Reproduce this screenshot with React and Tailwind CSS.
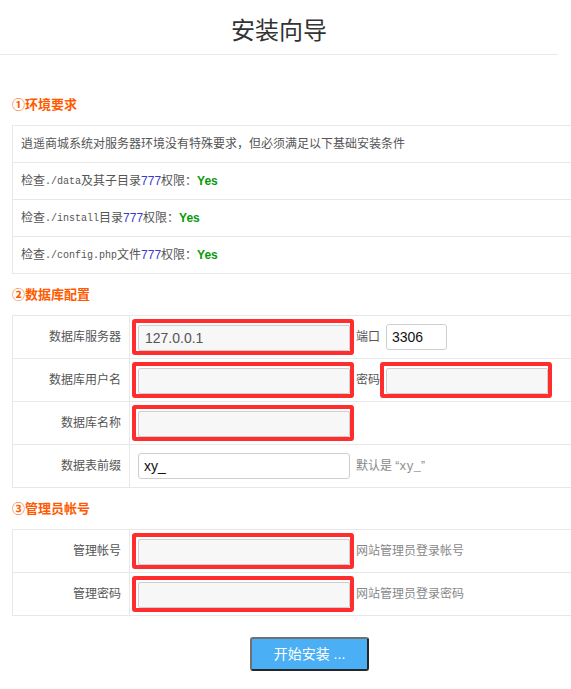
import React from "react";

const font = { fontFamily: '"Liberation Sans", "Noto Sans CJK SC", sans-serif' };

function Heading({ children }) {
  return (
    <h3 className="h-[20px] leading-[20px] text-[13px] font-bold text-[#ff5a00] mt-[11px] mb-[10px]">
      {children}
    </h3>
  );
}

function Marked({ width, value = "" }) {
  // red annotation box around an input
  return (
    <div className="inline-flex border-4 border-[#ff2d2d] rounded-[3px] pl-[2px] pt-[2px] shrink-0">
      <input
        defaultValue={value}
        style={{ width }}
        className="h-[26px] border border-[#cfcfcf] rounded-[2px] bg-[#f7f7f7] px-[6px] text-[14px] text-[#555] outline-none"
      />
    </div>
  );
}

function Row({ label, children }) {
  return (
    <div className="flex h-[43px] border-t border-[#e8e8e8] first:border-t-0 first:h-[42px]">
      <div className="w-[117px] shrink-0 border-r border-[#e8e8e8] flex items-center justify-end pr-[8px] text-[12px] text-[#555]">
        {label}
      </div>
      <div className="flex items-center pl-[2px] text-[12px] text-[#555]">{children}</div>
    </div>
  );
}

function Check({ path, suffix }) {
  return (
    <div className="h-[37px] flex items-center pl-[8px] text-[12px] text-[#555] border-t border-[#e8e8e8]">
      检查<span className="text-[10px]" style={{ fontFamily: '"Liberation Mono", monospace' }}>{path}</span>
      {suffix}
      <span className="text-[#3a3ad0]">777</span>权限：
      <b className="text-[#089a08] text-[12px]">Yes</b>
    </div>
  );
}

export default function App() {
  return (
    <div className="w-[571px] min-h-[689px] bg-white overflow-hidden" style={font}>
      <div className="h-[55px] border-b border-[#e8e8e8] flex items-center justify-center w-[558px] pt-[8px]">
        <h1 className="text-[24px] text-[#333]">安装向导</h1>
      </div>

      <div className="pl-[12px] pt-[29px]">
        <Heading>①环境要求</Heading>
        <div className="border-l border-t border-b border-[#e8e8e8]">
          <div className="h-[36px] flex items-center pl-[8px] text-[12px] text-[#555]">
            逍遥商城系统对服务器环境没有特殊要求，但必须满足以下基础安装条件
          </div>
          <Check path="./data" suffix="及其子目录" />
          <Check path="./install" suffix="目录" />
          <Check path="./config.php" suffix="文件" />
        </div>

        <Heading>②数据库配置</Heading>
        <div className="border-l border-t border-b border-[#e8e8e8]">
          <Row label="数据库服务器">
            <Marked width={212} value="127.0.0.1" />
            <span className="ml-[2px]">端口</span>
            <input
              defaultValue="3306"
              className="ml-[6px] w-[61px] h-[26px] border border-[#cfcfcf] rounded-[3px] bg-white px-[5px] text-[14px] text-[#111] outline-none"
            />
          </Row>
          <Row label="数据库用户名">
            <Marked width={212} />
            <span className="ml-[2px]">密码</span>
            <Marked width={162} />
          </Row>
          <Row label="数据库名称">
            <Marked width={212} />
          </Row>
          <Row label="数据表前缀">
            <input
              defaultValue="xy_"
              className="ml-[6px] w-[212px] h-[26px] border border-[#cfcfcf] rounded-[3px] bg-white px-[5px] text-[14px] text-[#111] outline-none"
            />
            <span className="ml-[6px] text-[#888]">
              默认是 “<span style={{ fontFamily: '"Liberation Mono", monospace' }}>xy_</span>”
            </span>
          </Row>
        </div>

        <Heading>③管理员帐号</Heading>
        <div className="border-l border-t border-b border-[#e8e8e8]">
          <Row label="管理帐号">
            <Marked width={212} />
            <span className="ml-[2px] text-[#888]">网站管理员登录帐号</span>
          </Row>
          <Row label="管理密码">
            <Marked width={212} />
            <span className="ml-[2px] text-[#888]">网站管理员登录密码</span>
          </Row>
        </div>

        <div className="pl-[238px] pt-[21px] pb-[19px]">
          <button className="w-[119px] h-[34px] bg-[#4aaff4] border-2 border-[#707070] border-b-[#262626] border-r-[#262626] rounded-[3px] text-white text-[14px]">
            开始安装 ...
          </button>
        </div>
      </div>
    </div>
  );
}
